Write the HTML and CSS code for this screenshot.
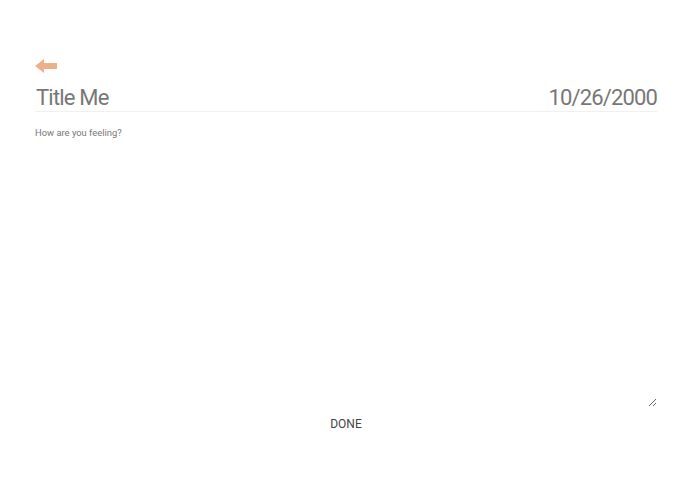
FILE: index.html
```
<!DOCTYPE html>
<html>
<head>
<meta charset="utf-8">
<link rel="stylesheet" href="styles.css">
</head>
<body>
<div class="page">
  <div class="back">
    <svg width="22" height="14" viewBox="0 0 22 14"><path d="M0 7 L9 0 L9 4 L22 4 L22 10 L9 10 L9 14 Z" fill="#eeb08a"/></svg>
  </div>
  <div class="head">
    <div class="title">Title Me</div>
    <div class="date">10/26/2000</div>
  </div>
  <textarea class="body" placeholder="How are you feeling?"></textarea>
  <div class="actions"><button class="done">DONE</button></div>
</div>
</body>
</html>
```
FILE: styles.css
```
html, body { margin: 0; padding: 0; background: #fff; }
body { font-family: Roboto, "Liberation Sans", sans-serif; }
.page { padding: 59px 38px 0 35px; }
.back { height: 14px; display: flex; }
.back svg { display: block; }
.head {
  margin-top: 8px;
  height: 30px;
  display: flex;
  justify-content: space-between;
  align-items: flex-end;
  border-bottom: 1px solid #f0f0f0;
}
.title, .date {
  font-size: 22px;
  line-height: 26px;
  color: #777;
  letter-spacing: -0.8px;
}
.title { padding-left: 1px; }
.date { letter-spacing: -0.85px; }
.body {
  display: block;
  box-sizing: border-box;
  width: 100%;
  height: 281px;
  margin-top: 14px;
  padding: 0;
  border: none;
  outline: none;
  font-family: Roboto, "Liberation Sans", sans-serif;
  font-size: 9.4px;
  line-height: 14px;
  color: #777;
  background: transparent;
}
.body::placeholder { color: #777; }
.actions { display: flex; justify-content: center; margin-top: 6px; }
.done {
  background: none;
  border: none;
  padding: 4px 8px;
  font-family: Roboto, "Liberation Sans", sans-serif;
  font-size: 12px;
  color: #444;
}
```
